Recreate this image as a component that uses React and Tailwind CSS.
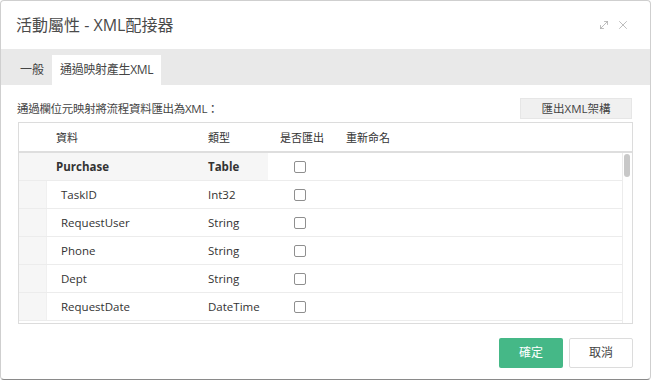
import React from "react";
import { MoveDiagonal, X } from "lucide-react";

const rows = [
  { name: "Purchase", type: "Table", parent: true },
  { name: "TaskID", type: "Int32" },
  { name: "RequestUser", type: "String" },
  { name: "Phone", type: "String" },
  { name: "Dept", type: "String" },
  { name: "RequestDate", type: "DateTime" },
];

function Checkbox() {
  return <span className="block w-[12px] h-[12px] border border-[#8f8f8f] rounded-[2px] bg-white" />;
}

function App() {
  return (
    <div
      className="w-[651px] h-[380px] bg-white border border-[#cfcfcf] border-b-[#8a8a8a] rounded-[4px] flex flex-col text-[#333] overflow-hidden"
      style={{ fontFamily: '"Open Sans", "Noto Sans CJK TC", sans-serif' }}
    >
      {/* header */}
      <div className="h-[48px] flex items-center justify-between pl-[15px] pr-[20px]">
        <h1 className="text-[16px] text-[#4a4a4a]">活動屬性 - XML配接器</h1>
        <div className="flex items-center gap-[6px] text-[#a0a0a0]">
          <MoveDiagonal size={12} strokeWidth={1.4} />
          <X size={14} strokeWidth={1.2} />
        </div>
      </div>

      {/* tabs */}
      <div className="h-[36px] bg-[#e9e9e9] flex items-end pl-[12px] text-[12px]">
        <div className="h-[30px] px-[7px] flex items-center text-[#444]">一般</div>
        <div className="h-[30px] px-[8px] ml-[1px] flex items-center bg-white text-[#444] tracking-[-0.3px]">
          通過映射產生XML
        </div>
      </div>

      {/* content */}
      <div className="px-[16px] pt-[13px] flex flex-col">
        <div className="flex items-center justify-between h-[21px]">
          <span className="text-[#444] text-[11.5px] tracking-[-0.3px]">通過欄位元映射將流程資料匯出為XML：</span>
          <button className="w-[112px] h-[21px] bg-[#f0f0f0] border border-[#e6e6e6] text-[#444] text-[11.5px] mr-[2px]">
            匯出XML架構
          </button>
        </div>

        <div className="mt-[3px] ml-[1px] mr-[1px] h-[202px] border border-[#dcdcdc] flex flex-col text-[11.5px]">
          {/* table head */}
          <div className="h-[30px] shrink-0 border-b-2 border-[#dedede] grid grid-cols-[27px_152px_70px_68px_1fr] items-center text-[11px] pt-[2px]">
            <div />
            <div className="pl-[10px]">資料</div>
            <div className="pl-[10px]">類型</div>
            <div className="pl-[12px]">是否匯出</div>
            <div className="pl-[10px]">重新命名</div>
          </div>

          {/* body */}
          <div className="flex flex-1 min-h-0">
            <div className="flex-1 flex flex-col">
              {rows.map((r) => (
                <div
                  key={r.name}
                  className="h-[28px] shrink-0 border-b border-[#ececec] grid grid-cols-[27px_152px_70px_68px_1fr] items-center"
                >
                  <div className="h-full bg-[#f6f6f6]" />
                  <div
                    className={
                      r.parent
                        ? "h-full flex items-center pl-[10px] font-bold bg-[#f6f6f6]"
                        : "h-full flex items-center pl-[14px] border-l border-[#f0f0f0]"
                    }
                  >
                    {r.name}
                  </div>
                  <div
                    className={
                      r.parent
                        ? "h-full flex items-center pl-[10px] font-bold bg-[#f6f6f6]"
                        : "h-full flex items-center pl-[10px]"
                    }
                  >
                    {r.type}
                  </div>
                  <div className="h-full flex items-center pl-[26px]">
                    <Checkbox />
                  </div>
                  <div />
                </div>
              ))}
            </div>
            <div className="w-[10px] shrink-0 border-l border-[#ececec] pt-[1px] pl-[1px]">
              <div className="w-[6px] h-[23px] rounded-[3px] bg-[#c8c8c8]" />
            </div>
          </div>
        </div>

        {/* footer */}
        <div className="flex justify-end gap-[6px] mt-[14px] mr-[1px]">
          <button className="w-[64px] h-[30px] bg-[#45b887] text-white text-[12px] rounded-[2px]">確定</button>
          <button className="w-[64px] h-[30px] bg-white border border-[#dcdcdc] text-[#444] text-[12px] rounded-[2px]">
            取消
          </button>
        </div>
      </div>
    </div>
  );
}

export default App;
